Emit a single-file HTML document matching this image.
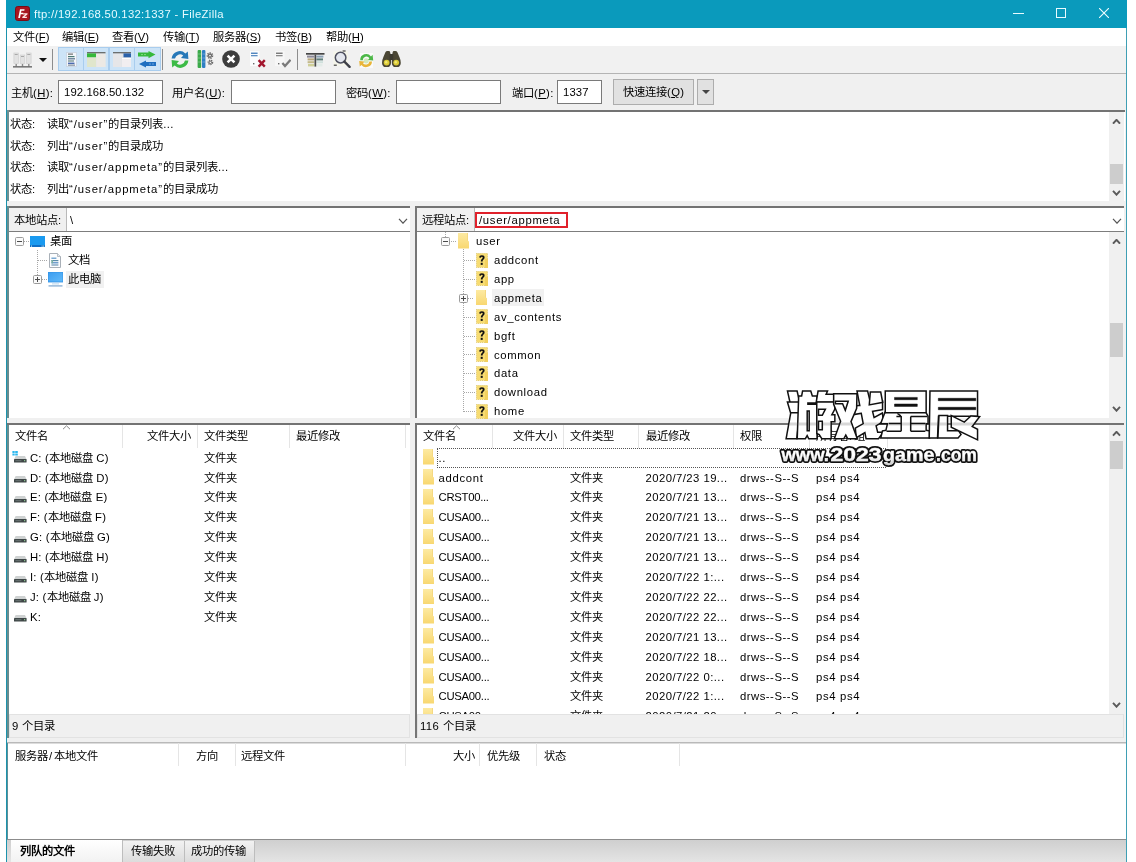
<!DOCTYPE html>
<html lang="zh-CN"><head><meta charset="utf-8"><title>ftp://192.168.50.132:1337 - FileZilla</title>
<style>
html,body{margin:0;padding:0;background:#fff}
body{will-change:transform;width:1136px;height:862px;position:relative;overflow:hidden;font:11.3px "Liberation Sans",sans-serif;color:#000;line-height:14px}
div,span,svg{position:absolute;box-sizing:border-box;white-space:nowrap}
u{text-decoration:underline;text-underline-offset:1px}
.t{height:14px;line-height:14px;color:#000}
.win{left:6px;top:0;width:1121px;height:862px;background:#f0f0f0;border-left:1px solid #1c93ad;border-right:1px solid #3f9fb4}
.title{left:6px;top:0;width:1121px;height:28px;background:#0a9abc}
.title .t{color:#e6fbff;left:28px;top:7px;letter-spacing:.33px}
.menu{left:7px;top:28px;width:1119px;height:18px;background:#fff}
.tb{left:7px;top:46px;width:1119px;height:27px;background:#f1f1f1}
.tbline{left:7px;top:73px;width:1119px;height:1px;background:#b4b4b4}
.tog{top:47px;height:24px;background:#cde4f7;border:1px solid #a9cdee}
.sep{width:1px;background:#8d8d8d}
.inp{top:80px;height:24px;background:#fff;border:1px solid #7a7a7a}
.btn{top:79px;height:26px;background:#e1e1e1;border:1px solid #adadad}
.pane{background:#fff}
.dk{background:#737373}
.sb{background:#f0f0f0;width:15px}
.th{background:#cdcdcd}
.hd{top:0;height:24px;border-right:1px solid #e5e5e5}
.stat{background:#f0f0f0;border:1px solid #e2e2e2;height:24px}
.sel{background:#f1f1f1}
i{font-style:normal;letter-spacing:.95px}
i.p{letter-spacing:.35px}
.lat{letter-spacing:.12px}
.lc{letter-spacing:.7px}
.fn{letter-spacing:-.28px}
.dt{letter-spacing:.45px}
.pm{letter-spacing:.5px}
.ow{letter-spacing:.66px}
.tr{letter-spacing:.65px}
.dr i{letter-spacing:.2px}
</style></head>
<body>
<svg width="0" height="0" style="left:0;top:0"><defs><linearGradient id="fg" x1="0" y1="0" x2="0" y2="1"><stop offset="0" stop-color="#fdeaa2"/><stop offset="1" stop-color="#f8d770"/></linearGradient><linearGradient id="pcg" x1="0" y1="0" x2="1" y2="1"><stop offset="0" stop-color="#3a9cf0"/><stop offset="1" stop-color="#62bbfa"/></linearGradient></defs></svg>
<div class="win"></div>
<div class="title"><svg style="left:9px;top:6px" width="15" height="15" viewBox="0 0 15 15" ><rect x="0.5" y="0.5" width="14" height="14" rx="2.2" fill="#a8141f" stroke="#7a0c16"/><path d="M3.2 12 L5 3.2 H9.6 L9.3 4.8 H6.4 L6 6.8 H8.4 L8.1 8.3 H5.7 L5 12 Z" fill="#fff"/><path d="M8.2 7.2 H12.6 L12.4 8.4 L9.6 10.7 H12 L11.8 12 H7.2 L7.4 10.8 L10.2 8.5 H8 Z" fill="#fde3e3"/></svg><span class="t" id="ttl">ftp://192.168.50.132:1337 - FileZilla</span><svg style="left:1007px;top:13px" width="11" height="1"><rect width="11" height="1" fill="#e8fbff"/></svg><svg style="left:1050px;top:8px" width="10" height="10"><rect x=".5" y=".5" width="9" height="9" fill="none" stroke="#e8fbff"/></svg><svg style="left:1093px;top:8px" width="10" height="10"><path d="M0 0L10 10M10 0L0 10" stroke="#f0fdff" stroke-width="1.1"/></svg></div>
<div class="menu"><span class="t mi" style="left:6px;top:2px;">文件(<u>F</u>)</span><span class="t mi" style="left:55px;top:2px;">编辑(<u>E</u>)</span><span class="t mi" style="left:105px;top:2px;">查看(<u>V</u>)</span><span class="t mi" style="left:156px;top:2px;">传输(<u>T</u>)</span><span class="t mi" style="left:206px;top:2px;">服务器(<u>S</u>)</span><span class="t mi" style="left:268px;top:2px;">书签(<u>B</u>)</span><span class="t mi" style="left:319px;top:2px;">帮助(<u>H</u>)</span></div>
<div class="tb"></div><div class="tbline"></div>
<svg style="left:12.5px;top:50.5px" width="19" height="18" viewBox="0 0 19 18" ><rect x="0.9" y="2" width="4.6" height="10.5" fill="#e2e2e2" stroke="#cdcdcd" stroke-width=".6"/><rect x="1.7" y="3" width="3" height="1" fill="#a8a8a8"/><rect x="2.5" y="13" width="1.4" height="2.3" fill="#8a8a8a"/><rect x="7.2" y="4" width="4.6" height="8.5" fill="#e2e2e2" stroke="#cdcdcd" stroke-width=".6"/><rect x="8" y="5" width="3" height="1" fill="#a8a8a8"/><rect x="8.8" y="13" width="1.4" height="2.3" fill="#8a8a8a"/><rect x="13.5" y="2" width="4.6" height="10.5" fill="#e2e2e2" stroke="#cdcdcd" stroke-width=".6"/><rect x="14.3" y="3" width="3" height="1" fill="#a8a8a8"/><rect x="15.1" y="13" width="1.4" height="2.3" fill="#8a8a8a"/><rect x="0" y="15.2" width="19" height="1.3" fill="#5c5c5c"/></svg><svg style="left:39px;top:57.5px" width="8" height="4"><path d="M0 0H8L4 4Z" fill="#111"/></svg><div class="sep" style="left:52px;top:49px;width:1px;height:21px;"></div><div class="tog" style="left:58px;top:47px;width:26px;height:24px;"></div><div class="tog" style="left:83px;top:47px;width:26px;height:24px;"></div><div class="tog" style="left:109px;top:47px;width:26px;height:24px;"></div><div class="tog" style="left:134px;top:47px;width:27px;height:24px;"></div><svg style="left:66px;top:52px" width="11" height="15" viewBox="0 0 11 15" ><rect x=".5" y=".5" width="10" height="14" fill="#f3f6fa" stroke="#c9d3df" stroke-width=".8"/><rect x="2" y="1.6" width="5" height="1" fill="#555"/><rect x="2" y="4" width="6.5" height="1.2" fill="#4a7a74"/><rect x="2" y="6.2" width="7" height="1.2" fill="#55708a"/><rect x="2" y="8.4" width="6" height="1.2" fill="#6a8a86"/><rect x="2" y="10.6" width="6.5" height="1.4" fill="#4a6ab0"/><rect x="2" y="12.6" width="7" height="1" fill="#6a7a8a"/></svg><svg style="left:87px;top:51.7px" width="18.5" height="15.5" viewBox="0 0 18.5 15.5" ><rect x="0" y="0" width="18.5" height="15.5" fill="#dfe3e8"/><rect x="0" y="0" width="18.5" height="1.4" fill="#6b6f6f"/><rect x="0" y="1.4" width="9" height="4" fill="#35b83a"/><rect x="0" y="5.6" width="9" height="9.9" fill="#e0e6cc"/><rect x="9.4" y="1.8" width="9.1" height="13.7" fill="#ede9e4"/></svg><svg style="left:112.8px;top:51.7px" width="18.5" height="15.5" viewBox="0 0 18.5 15.5" ><rect x="0" y="0" width="18.5" height="15.5" fill="#dfe3e8"/><rect x="0" y="0" width="18.5" height="1.4" fill="#6b6f6f"/><rect x="10.5" y="1.4" width="8" height="4" fill="#2a62aa"/><rect x="0" y="1.8" width="8.6" height="13.7" fill="#e6e6e8"/><rect x="9" y="5.8" width="9.5" height="9.7" fill="#f1eef0"/><rect x="9" y="6" width="9.5" height="1" fill="#fff"/></svg><svg style="left:138px;top:51px" width="18" height="17" viewBox="0 0 18 17" ><path d="M0 1.6 H10.5 V0 L17.5 3.6 L10.5 7.2 V5.6 H0 Z" fill="#36b93c"/><path d="M18 11 H8 V9.4 L1 13 L8 16.6 V15 H18 Z" fill="#1f6fc0"/><path d="M3 3.6h2M6 3.6h2" stroke="#7fd884" stroke-width="1"/><path d="M11 13h2M14 13h2" stroke="#6aa4e0" stroke-width="1"/></svg><div class="sep" style="left:162px;top:49px;width:1px;height:21px;"></div><svg style="left:169.6px;top:49.6px" width="20" height="19" viewBox="0 0 20 19" ><path d="M1.6 8.4 A8.2 8.2 0 0 1 15.4 3.4 L17.8 1.4 L18.4 9 L11 8 L13.2 5.6 A5 5 0 0 0 5 8.4 Z" fill="#2778b8"/><path d="M18.4 10.6 A8.2 8.2 0 0 1 4.6 15.6 L2.2 17.6 L1.6 10 L9 11 L6.8 13.4 A5 5 0 0 0 15 10.6 Z" fill="#3cbb46"/></svg><svg style="left:197.2px;top:50px" width="17" height="18" viewBox="0 0 17 18" ><rect x="0.6" y="0" width="3.6" height="18" rx="1" fill="#3aa94a"/><rect x="5" y="0" width="3.4" height="18" rx="1" fill="#2f7fc4"/><path d="M1 4h3M1 8h3M1 12h3M5.4 4h2.6M5.4 8h2.6M5.4 12h2.6" stroke="#fff" stroke-opacity=".35" stroke-width=".8"/><circle cx="13" cy="5.6" r="2.5" fill="none" stroke="#666" stroke-width="1.7" stroke-dasharray="1.3 .9"/><circle cx="13" cy="5.6" r="1.5" fill="none" stroke="#666" stroke-width="1.1"/><circle cx="13.4" cy="12.4" r="2.1" fill="none" stroke="#6a6a6a" stroke-width="1.5" stroke-dasharray="1.1 .8"/><circle cx="13.4" cy="12.4" r="1.2" fill="none" stroke="#6a6a6a" stroke-width="1"/></svg><svg style="left:221.8px;top:50.2px" width="18" height="18" viewBox="0 0 18 18" ><circle cx="9" cy="9" r="8.8" fill="#3d3d3d"/><path d="M5.6 5.6 L12.4 12.4 M12.4 5.6 L5.6 12.4" stroke="#fff" stroke-width="2.6"/></svg><svg style="left:249.5px;top:51.4px" width="16" height="17" viewBox="0 0 16 17" ><rect x="0" y="0" width="9.5" height="15" fill="#fbfcfd"/><rect x="1" y="1.6" width="6.6" height="1.3" fill="#3f79b8"/><rect x="1" y="4" width="6.6" height="1.3" fill="#5f8fc4"/><rect x="3" y="12" width="1.4" height="1.4" fill="#6a6a6a"/><path d="M8.6 9.2 L14.8 15.6 M14.8 9.2 L8.6 15.6" stroke="#a3162e" stroke-width="2.4"/></svg><svg style="left:274.8px;top:51.4px" width="16.5" height="17" viewBox="0 0 16.5 17" ><rect x="0" y="0" width="9.5" height="15" fill="#f7f7f7"/><rect x="1" y="1.6" width="6.6" height="1.3" fill="#6d6d6d"/><rect x="1" y="4" width="6.6" height="1.3" fill="#8a8a8a"/><rect x="3" y="12" width="1.4" height="1.4" fill="#6a6a6a"/><path d="M7.4 12 L10 15 L15.6 8.8" stroke="#7a7a7a" stroke-width="2.3" fill="none"/></svg><div class="sep" style="left:297px;top:49px;width:1px;height:21px;"></div><svg style="left:306px;top:52.8px" width="18.5" height="14" viewBox="0 0 18.5 14" ><rect x="0" y="0" width="18.5" height="1.7" fill="#454545"/><rect x="1" y="2.6" width="7.2" height="2" fill="#8d8a98"/><rect x="10.4" y="2.6" width="7" height="2" fill="#8aa0b4"/><rect x="1.6" y="5.4" width="6.6" height="2" fill="#b9a77c"/><rect x="10.4" y="5.4" width="6.6" height="2" fill="#5f7f7c"/><rect x="1.6" y="8.2" width="6.6" height="2" fill="#c3b98a"/><rect x="10.4" y="8.2" width="6.6" height="2" fill="#cfe0dc"/><rect x="2" y="11" width="6.2" height="2.4" fill="#cfcf98"/><rect x="10.4" y="11" width="6" height="2.4" fill="#e3ece8"/><rect x="8.5" y="1.6" width="1.7" height="12" fill="#4a4a4a"/></svg><svg style="left:332.6px;top:50.4px" width="18" height="18" viewBox="0 0 18 18" ><rect x="0.4" y="1.4" width="14.6" height="14.4" fill="#f5f5ea"/><circle cx="7.6" cy="7.6" r="5.3" fill="#e3e6ee" stroke="#4e5060" stroke-width="1.5"/><path d="M11.4 11.6 L16.6 16.8" stroke="#3e4048" stroke-width="2.4" stroke-linecap="round"/><rect x="9.6" y="0.4" width="3" height="1.2" fill="#444"/><rect x="0.8" y="14.6" width="3" height="1.2" fill="#444"/></svg><svg style="left:359px;top:52.6px" width="15" height="15" viewBox="0 0 15 15" ><rect x="1" y="0" width="13" height="15" fill="#fafafa"/><path d="M1.2 7.2 A6 6 0 0 1 12 3.4 L13.6 1.8 L14.2 7.4 L8.8 7 L10.4 5.2 A3.6 3.6 0 0 0 3.8 7.2 Z" fill="#4db848"/><path d="M13 8.4 A6 6 0 0 1 2.4 12 L0.8 13.6 L0.2 8 L5.6 8.4 L4 10.2 A3.6 3.6 0 0 0 10.4 8.4 Z" fill="#e8b53a"/><circle cx="7.2" cy="7.8" r="2.6" fill="#bfe0a0" fill-opacity=".7"/></svg><svg style="left:382.4px;top:51.4px" width="19" height="16" viewBox="0 0 19 16" ><path d="M3.4 1.2 Q4 0 5.4 0 H6.8 Q8 0 8.2 1.4 L9 6 V12 A4.4 4.4 0 0 1 0 12 Q0 9 1.4 6 Z" fill="#4b4735"/><path d="M15.4 1.2 Q14.8 0 13.4 0 H12 Q10.8 0 10.6 1.4 L9.8 6 V12 A4.4 4.4 0 0 0 18.8 12 Q18.8 9 17.4 6 Z" fill="#4b4735"/><rect x="7.6" y="3" width="3.6" height="6" fill="#3c3a30"/><circle cx="4.6" cy="11.6" r="2.9" fill="#dccb35"/><circle cx="14.2" cy="11.6" r="2.9" fill="#dccb35"/><circle cx="4.2" cy="11.2" r="1.2" fill="#f0e878"/><circle cx="13.8" cy="11.2" r="1.2" fill="#f0e878"/></svg>
<div class="qc" style="left:0;top:0;width:0;height:0"><span class="t" style="left:11px;top:86px;">主机<i class="p">(<u>H</u>):</i></span><div class="inp" style="left:58px;top:80px;width:105px;height:24px;"><span class="t lat" style="left:5px;top:4px;left:5px">192.168.50.132</span></div><span class="t" style="left:172px;top:86px;">用户名<i class="p">(<u>U</u>):</i></span><div class="inp" style="left:231px;top:80px;width:105px;height:24px;"></div><span class="t" style="left:346px;top:86px;">密码<i class="p">(<u>W</u>):</i></span><div class="inp" style="left:396px;top:80px;width:105px;height:24px;"></div><span class="t" style="left:512px;top:86px;">端口<i class="p">(<u>P</u>):</i></span><div class="inp" style="left:557px;top:80px;width:45px;height:24px;"><span class="t lat" style="left:5px;top:4px;">1337</span></div><div class="btn" style="left:613px;top:79px;width:81px;height:26px;"><span class="t" style="left:9px;top:5px;">快速连接<i class="p">(<u>Q</u>)</i></span></div><div class="btn" style="left:697px;top:79px;width:17px;height:26px;"><svg style="left:4px;top:10px" width="8" height="4"><path d="M0 0H8L4 4Z" fill="#444"/></svg></div></div>
<div class="dk" style="left:8px;top:110px;width:1117px;height:2px;"></div><div class="pane" style="left:8px;top:112px;width:1117px;height:89px;"></div><div class="" style="left:7px;top:110px;width:1.6px;height:91px;background:#6f9092"></div><span class="t" style="left:10px;top:117px;">状态:</span><span class="t" style="left:47px;top:117px;">读取<i>“/user”</i>的目录列表<i class="p">...</i></span><span class="t" style="left:10px;top:138.5px;">状态:</span><span class="t" style="left:47px;top:138.5px;">列出<i>“/user”</i>的目录成功</span><span class="t" style="left:10px;top:160px;">状态:</span><span class="t" style="left:47px;top:160px;">读取<i>“/user/appmeta”</i>的目录列表<i class="p">...</i></span><span class="t" style="left:10px;top:181.5px;">状态:</span><span class="t" style="left:47px;top:181.5px;">列出<i>“/user/appmeta”</i>的目录成功</span><div class="sb" style="left:1109px;top:112px;width:15px;height:89px;"></div><svg style="left:1112px;top:118.5px" width="9" height="5.5" viewBox="0 0 9 5.5" ><path d="M1 4.7 L4.5 0.8 L8 4.7" fill="none" stroke="#5a5a5a" stroke-width="1.9"/></svg><div class="th" style="left:1110px;top:164px;width:13px;height:20px;"></div><svg style="left:1112px;top:190px" width="9" height="5.5" viewBox="0 0 9 5.5" ><path d="M1 0.8 L4.5 4.7 L8 0.8" fill="none" stroke="#5a5a5a" stroke-width="1.9"/></svg>
<div class="dk" style="left:7px;top:206px;width:403px;height:2px;"></div><div class="" style="left:7px;top:206px;width:2px;height:211.5px;background:#688c8e"></div><div class="" style="left:7px;top:423px;width:2px;height:315px;background:#688c8e"></div><div class="pane" style="left:9px;top:208px;width:401px;height:23px;"></div><div class="" style="left:9px;top:208px;width:58px;height:23px;background:#f0f0f0;border-right:1px solid #b9b9b9"><span class="t" style="left:5px;top:5px;">本地站点:</span></div><span class="t" style="left:70px;top:213px;">\</span><svg style="left:398px;top:217.5px" width="10" height="6" viewBox="0 0 10 6" ><path d="M1 0.8 L5 5.2 L9 0.8" fill="none" stroke="#555" stroke-width="1.2"/></svg><div class="" style="left:9px;top:231px;width:401px;height:1px;background:#7d7d7d"></div><div class="pane" style="left:9px;top:232px;width:401px;height:185.5px;"></div><div class="dk" style="left:415px;top:206px;width:709px;height:2px;"></div><div class="" style="left:415px;top:206px;width:2px;height:211.5px;background:#767676"></div><div class="" style="left:415px;top:423px;width:2px;height:315px;background:#767676"></div><div class="pane" style="left:417px;top:208px;width:707px;height:23px;"></div><div class="" style="left:417px;top:208px;width:58px;height:23px;background:#f0f0f0;border-right:1px solid #b9b9b9"><span class="t" style="left:5px;top:5px;">远程站点:</span></div><span class="t lc" style="left:479px;top:213px;">/user/appmeta</span><div class="" style="left:475px;top:211.5px;width:93px;height:16.5px;border:2px solid #e0212b"></div><svg style="left:1112px;top:217.5px" width="10" height="6" viewBox="0 0 10 6" ><path d="M1 0.8 L5 5.2 L9 0.8" fill="none" stroke="#555" stroke-width="1.2"/></svg><div class="" style="left:417px;top:231px;width:707px;height:1px;background:#7d7d7d"></div><div class="pane" style="left:417px;top:232px;width:707px;height:185.5px;"></div>
<div class="" style="left:37px;top:250px;width:1px;height:25px;background:repeating-linear-gradient(180deg,#a8a8a8 0 1px,transparent 1px 2px)"></div><div class="" style="left:38px;top:260px;width:10px;height:1px;background:repeating-linear-gradient(90deg,#a8a8a8 0 1px,transparent 1px 2px)"></div><div class="" style="left:24px;top:241px;width:5px;height:1px;background:repeating-linear-gradient(90deg,#a8a8a8 0 1px,transparent 1px 2px)"></div><div class="" style="left:42px;top:279px;width:5px;height:1px;background:repeating-linear-gradient(90deg,#a8a8a8 0 1px,transparent 1px 2px)"></div><svg style="left:15px;top:237px" width="9" height="9" viewBox="0 0 9 9" ><rect x=".5" y=".5" width="8" height="8" rx="1" fill="#fafafa" stroke="#9b9b9b"/><rect x="2" y="4" width="5" height="1" fill="#4a4a4a"/></svg><svg style="left:29.8px;top:235.6px" width="15" height="11" viewBox="0 0 15 11" ><rect x="0" y="0" width="15" height="11" fill="#1a9af0"/><rect x="0" y="9" width="15" height="2" fill="#0f6fc6"/><rect x="1" y="9.6" width="1" height="1" fill="#dff"/><rect x="11.6" y="9.6" width="1" height="1" fill="#dff"/><rect x="13.2" y="9.6" width="1" height="1" fill="#dff"/></svg><span class="t" style="left:50px;top:234px;">桌面</span><svg style="left:49px;top:252.6px" width="12" height="15" viewBox="0 0 12 15" ><path d="M.5 .5 H8.5 L11.5 3.5 V14.5 H.5 Z" fill="#fcfdfe" stroke="#a9b0b8"/><path d="M8.5 .5 V3.5 H11.5" fill="#e4e8ee" stroke="#a9b0b8" stroke-width=".8"/><rect x="2.4" y="4.6" width="5" height="1.2" fill="#5a94c8"/><rect x="2.4" y="7" width="7" height="1.2" fill="#5a8aa8"/><rect x="2.4" y="9.2" width="7" height="1.2" fill="#4d86c0"/><rect x="2.4" y="11.4" width="7" height="1.2" fill="#6a93b4"/><rect x="2.4" y="7" width="1.6" height="3.4" fill="#7ab0a0"/></svg><span class="t" style="left:67.5px;top:253px;">文档</span><div class="sel" style="left:65.5px;top:270.5px;width:38.5px;height:17px;"></div><svg style="left:33px;top:275px" width="9" height="9" viewBox="0 0 9 9" ><rect x=".5" y=".5" width="8" height="8" rx="1" fill="#fafafa" stroke="#9b9b9b"/><rect x="2" y="4" width="5" height="1" fill="#4a4a4a"/><rect x="4" y="2" width="1" height="5" fill="#4a4a4a"/></svg><svg style="left:47.8px;top:272px" width="15" height="15" viewBox="0 0 15 15" ><rect x="0" y="0" width="15" height="10" fill="url(#pcg)"/><rect x="0" y="0" width="15" height="10" fill="none" stroke="#2f8fe4" stroke-width=".8"/><rect x="4" y="11.4" width="7" height="1" fill="#b8d6ee"/><rect x="0.5" y="13.2" width="14" height="1.4" fill="#8fb4d6"/></svg><span class="t" style="left:67.5px;top:272px;">此电脑</span>
<div class="" style="left:445px;top:232px;width:1px;height:5px;background:repeating-linear-gradient(180deg,#a8a8a8 0 1px,transparent 1px 2px)"></div><div class="" style="left:451px;top:241px;width:6px;height:1px;background:repeating-linear-gradient(90deg,#a8a8a8 0 1px,transparent 1px 2px)"></div><div class="" style="left:463px;top:249px;width:1px;height:163px;background:repeating-linear-gradient(180deg,#a8a8a8 0 1px,transparent 1px 2px)"></div><svg style="left:441px;top:237px" width="9" height="9" viewBox="0 0 9 9" ><rect x=".5" y=".5" width="8" height="8" rx="1" fill="#fafafa" stroke="#9b9b9b"/><rect x="2" y="4" width="5" height="1" fill="#4a4a4a"/></svg><svg style="left:458px;top:233px" width="12" height="15.5" viewBox="0 0 12 15.5" ><path d="M0 0 H9 V6.975 L11 8.525 V15.5 H0 Z" fill="url(#fg)"/><rect x="9" y="0" width=".8" height="7.75" fill="#f3cf62"/></svg><span class="t tr" style="left:476px;top:234px;">user</span><div class="" style="left:464px;top:260px;width:11px;height:1px;background:repeating-linear-gradient(90deg,#a8a8a8 0 1px,transparent 1px 2px)"></div><svg style="left:476px;top:252.5px" width="12" height="15" viewBox="0 0 12 15" ><rect x=".4" y=".4" width="11.2" height="14.2" fill="#f7dc72" stroke="#d9c26a" stroke-width=".8" stroke-dasharray="1 1"/><rect x="9" y="6" width="3" height="9" fill="#f2d05e"/><path d="M3.2 4.6 Q3.2 2.2 5.9 2.2 Q8.6 2.2 8.6 4.5 Q8.6 5.9 7.3 6.8 Q6.6 7.3 6.6 8.6 H4.8 Q4.7 6.8 5.8 6 Q6.7 5.3 6.7 4.6 Q6.7 3.8 5.9 3.8 Q5.1 3.8 5 4.8 Z" fill="#111"/><rect x="4.7" y="9.8" width="2" height="2.1" fill="#111"/></svg><span class="t tr" style="left:494px;top:253px;">addcont</span><div class="" style="left:464px;top:279px;width:11px;height:1px;background:repeating-linear-gradient(90deg,#a8a8a8 0 1px,transparent 1px 2px)"></div><svg style="left:476px;top:271.4px" width="12" height="15" viewBox="0 0 12 15" ><rect x=".4" y=".4" width="11.2" height="14.2" fill="#f7dc72" stroke="#d9c26a" stroke-width=".8" stroke-dasharray="1 1"/><rect x="9" y="6" width="3" height="9" fill="#f2d05e"/><path d="M3.2 4.6 Q3.2 2.2 5.9 2.2 Q8.6 2.2 8.6 4.5 Q8.6 5.9 7.3 6.8 Q6.6 7.3 6.6 8.6 H4.8 Q4.7 6.8 5.8 6 Q6.7 5.3 6.7 4.6 Q6.7 3.8 5.9 3.8 Q5.1 3.8 5 4.8 Z" fill="#111"/><rect x="4.7" y="9.8" width="2" height="2.1" fill="#111"/></svg><span class="t tr" style="left:494px;top:271.9px;">app</span><div class="sel" style="left:492px;top:289.3px;width:52px;height:17px;"></div><div class="" style="left:468px;top:298px;width:6px;height:1px;background:repeating-linear-gradient(90deg,#a8a8a8 0 1px,transparent 1px 2px)"></div><svg style="left:459px;top:294px" width="9" height="9" viewBox="0 0 9 9" ><rect x=".5" y=".5" width="8" height="8" rx="1" fill="#fafafa" stroke="#9b9b9b"/><rect x="2" y="4" width="5" height="1" fill="#4a4a4a"/><rect x="4" y="2" width="1" height="5" fill="#4a4a4a"/></svg><svg style="left:476px;top:290.3px" width="12" height="15" viewBox="0 0 12 15" ><path d="M0 0 H9 V6.75 L11 8.25 V15 H0 Z" fill="url(#fg)"/><rect x="9" y="0" width=".8" height="7.5" fill="#f3cf62"/></svg><span class="t tr" style="left:494px;top:290.8px;">appmeta</span><div class="" style="left:464px;top:317px;width:11px;height:1px;background:repeating-linear-gradient(90deg,#a8a8a8 0 1px,transparent 1px 2px)"></div><svg style="left:476px;top:309.2px" width="12" height="15" viewBox="0 0 12 15" ><rect x=".4" y=".4" width="11.2" height="14.2" fill="#f7dc72" stroke="#d9c26a" stroke-width=".8" stroke-dasharray="1 1"/><rect x="9" y="6" width="3" height="9" fill="#f2d05e"/><path d="M3.2 4.6 Q3.2 2.2 5.9 2.2 Q8.6 2.2 8.6 4.5 Q8.6 5.9 7.3 6.8 Q6.6 7.3 6.6 8.6 H4.8 Q4.7 6.8 5.8 6 Q6.7 5.3 6.7 4.6 Q6.7 3.8 5.9 3.8 Q5.1 3.8 5 4.8 Z" fill="#111"/><rect x="4.7" y="9.8" width="2" height="2.1" fill="#111"/></svg><span class="t tr" style="left:494px;top:309.7px;">av_contents</span><div class="" style="left:464px;top:336px;width:11px;height:1px;background:repeating-linear-gradient(90deg,#a8a8a8 0 1px,transparent 1px 2px)"></div><svg style="left:476px;top:328.1px" width="12" height="15" viewBox="0 0 12 15" ><rect x=".4" y=".4" width="11.2" height="14.2" fill="#f7dc72" stroke="#d9c26a" stroke-width=".8" stroke-dasharray="1 1"/><rect x="9" y="6" width="3" height="9" fill="#f2d05e"/><path d="M3.2 4.6 Q3.2 2.2 5.9 2.2 Q8.6 2.2 8.6 4.5 Q8.6 5.9 7.3 6.8 Q6.6 7.3 6.6 8.6 H4.8 Q4.7 6.8 5.8 6 Q6.7 5.3 6.7 4.6 Q6.7 3.8 5.9 3.8 Q5.1 3.8 5 4.8 Z" fill="#111"/><rect x="4.7" y="9.8" width="2" height="2.1" fill="#111"/></svg><span class="t tr" style="left:494px;top:328.6px;">bgft</span><div class="" style="left:464px;top:354px;width:11px;height:1px;background:repeating-linear-gradient(90deg,#a8a8a8 0 1px,transparent 1px 2px)"></div><svg style="left:476px;top:347px" width="12" height="15" viewBox="0 0 12 15" ><rect x=".4" y=".4" width="11.2" height="14.2" fill="#f7dc72" stroke="#d9c26a" stroke-width=".8" stroke-dasharray="1 1"/><rect x="9" y="6" width="3" height="9" fill="#f2d05e"/><path d="M3.2 4.6 Q3.2 2.2 5.9 2.2 Q8.6 2.2 8.6 4.5 Q8.6 5.9 7.3 6.8 Q6.6 7.3 6.6 8.6 H4.8 Q4.7 6.8 5.8 6 Q6.7 5.3 6.7 4.6 Q6.7 3.8 5.9 3.8 Q5.1 3.8 5 4.8 Z" fill="#111"/><rect x="4.7" y="9.8" width="2" height="2.1" fill="#111"/></svg><span class="t tr" style="left:494px;top:347.5px;">common</span><div class="" style="left:464px;top:373px;width:11px;height:1px;background:repeating-linear-gradient(90deg,#a8a8a8 0 1px,transparent 1px 2px)"></div><svg style="left:476px;top:365.9px" width="12" height="15" viewBox="0 0 12 15" ><rect x=".4" y=".4" width="11.2" height="14.2" fill="#f7dc72" stroke="#d9c26a" stroke-width=".8" stroke-dasharray="1 1"/><rect x="9" y="6" width="3" height="9" fill="#f2d05e"/><path d="M3.2 4.6 Q3.2 2.2 5.9 2.2 Q8.6 2.2 8.6 4.5 Q8.6 5.9 7.3 6.8 Q6.6 7.3 6.6 8.6 H4.8 Q4.7 6.8 5.8 6 Q6.7 5.3 6.7 4.6 Q6.7 3.8 5.9 3.8 Q5.1 3.8 5 4.8 Z" fill="#111"/><rect x="4.7" y="9.8" width="2" height="2.1" fill="#111"/></svg><span class="t tr" style="left:494px;top:366.4px;">data</span><div class="" style="left:464px;top:392px;width:11px;height:1px;background:repeating-linear-gradient(90deg,#a8a8a8 0 1px,transparent 1px 2px)"></div><svg style="left:476px;top:384.8px" width="12" height="15" viewBox="0 0 12 15" ><rect x=".4" y=".4" width="11.2" height="14.2" fill="#f7dc72" stroke="#d9c26a" stroke-width=".8" stroke-dasharray="1 1"/><rect x="9" y="6" width="3" height="9" fill="#f2d05e"/><path d="M3.2 4.6 Q3.2 2.2 5.9 2.2 Q8.6 2.2 8.6 4.5 Q8.6 5.9 7.3 6.8 Q6.6 7.3 6.6 8.6 H4.8 Q4.7 6.8 5.8 6 Q6.7 5.3 6.7 4.6 Q6.7 3.8 5.9 3.8 Q5.1 3.8 5 4.8 Z" fill="#111"/><rect x="4.7" y="9.8" width="2" height="2.1" fill="#111"/></svg><span class="t tr" style="left:494px;top:385.3px;">download</span><div class="" style="left:464px;top:411px;width:11px;height:1px;background:repeating-linear-gradient(90deg,#a8a8a8 0 1px,transparent 1px 2px)"></div><svg style="left:476px;top:403.7px" width="12" height="15" viewBox="0 0 12 15" ><rect x=".4" y=".4" width="11.2" height="14.2" fill="#f7dc72" stroke="#d9c26a" stroke-width=".8" stroke-dasharray="1 1"/><rect x="9" y="6" width="3" height="9" fill="#f2d05e"/><path d="M3.2 4.6 Q3.2 2.2 5.9 2.2 Q8.6 2.2 8.6 4.5 Q8.6 5.9 7.3 6.8 Q6.6 7.3 6.6 8.6 H4.8 Q4.7 6.8 5.8 6 Q6.7 5.3 6.7 4.6 Q6.7 3.8 5.9 3.8 Q5.1 3.8 5 4.8 Z" fill="#111"/><rect x="4.7" y="9.8" width="2" height="2.1" fill="#111"/></svg><span class="t tr" style="left:494px;top:404.2px;">home</span><div class="sb" style="left:1109px;top:232px;width:15px;height:185.5px;"></div><svg style="left:1112px;top:238.5px" width="9" height="5.5" viewBox="0 0 9 5.5" ><path d="M1 4.7 L4.5 0.8 L8 4.7" fill="none" stroke="#5a5a5a" stroke-width="1.9"/></svg><div class="th" style="left:1110px;top:322.5px;width:13px;height:34px;"></div><svg style="left:1112px;top:406px" width="9" height="5.5" viewBox="0 0 9 5.5" ><path d="M1 0.8 L4.5 4.7 L8 0.8" fill="none" stroke="#5a5a5a" stroke-width="1.9"/></svg>
<div class="dk" style="left:7px;top:423px;width:403px;height:2px;"></div><div class="pane" style="left:9px;top:425px;width:401px;height:289px;"></div><div class="hd" style="left:9px;top:425px;width:113.5px;height:23px;"><span class="t" style="left:5.5px;top:4px;">文件名</span></div><div class="hd" style="left:122.5px;top:425px;width:75.5px;height:23px;"><span class="t" style="left:24.5px;top:4px;">文件大小</span></div><div class="hd" style="left:198px;top:425px;width:92px;height:23px;"><span class="t" style="left:6px;top:4px;">文件类型</span></div><div class="hd" style="left:290px;top:425px;width:116px;height:23px;"><span class="t" style="left:6px;top:4px;">最近修改</span></div><svg style="left:62px;top:424.5px" width="9" height="5" viewBox="0 0 9 5" ><path d="M1 4.2 L4.5 0.8 L8 4.2" fill="none" stroke="#8a8a8a" stroke-width="1"/></svg><svg style="left:14px;top:451.2px" width="13" height="12" viewBox="0 0 13 12" overflow="visible"><path d="M1.6 5 H11 L12.4 8 H.2 Z" fill="#cfd2d2"/><rect x="0" y="8" width="12.6" height="3.6" rx=".6" fill="#3f4747"/><rect x="1.4" y="9.2" width="6" height="1" fill="#6c7676"/><rect x="10" y="9.2" width="1.2" height="1" fill="#9fe0a0"/><rect x="-1.6" y="0" width="2.3" height="2" fill="#2bb7ee"/><rect x="1.2" y="0" width="2.6" height="2" fill="#2bb7ee"/><rect x="-1.6" y="2.5" width="2.3" height="2" fill="#2bb7ee"/><rect x="1.2" y="2.5" width="2.6" height="2" fill="#2bb7ee"/></svg><span class="t dr" style="left:30px;top:450.6px;"><i>C: (</i>本地磁盘<i> C)</i></span><span class="t" style="left:204px;top:450.6px;">文件夹</span><svg style="left:14px;top:471.1px" width="13" height="12" viewBox="0 0 13 12" overflow="visible"><path d="M1.6 5 H11 L12.4 8 H.2 Z" fill="#cfd2d2"/><rect x="0" y="8" width="12.6" height="3.6" rx=".6" fill="#3f4747"/><rect x="1.4" y="9.2" width="6" height="1" fill="#6c7676"/><rect x="10" y="9.2" width="1.2" height="1" fill="#9fe0a0"/></svg><span class="t dr" style="left:30px;top:470.5px;"><i>D: (</i>本地磁盘<i> D)</i></span><span class="t" style="left:204px;top:470.5px;">文件夹</span><svg style="left:14px;top:491px" width="13" height="12" viewBox="0 0 13 12" overflow="visible"><path d="M1.6 5 H11 L12.4 8 H.2 Z" fill="#cfd2d2"/><rect x="0" y="8" width="12.6" height="3.6" rx=".6" fill="#3f4747"/><rect x="1.4" y="9.2" width="6" height="1" fill="#6c7676"/><rect x="10" y="9.2" width="1.2" height="1" fill="#9fe0a0"/></svg><span class="t dr" style="left:30px;top:490.4px;"><i>E: (</i>本地磁盘<i> E)</i></span><span class="t" style="left:204px;top:490.4px;">文件夹</span><svg style="left:14px;top:510.9px" width="13" height="12" viewBox="0 0 13 12" overflow="visible"><path d="M1.6 5 H11 L12.4 8 H.2 Z" fill="#cfd2d2"/><rect x="0" y="8" width="12.6" height="3.6" rx=".6" fill="#3f4747"/><rect x="1.4" y="9.2" width="6" height="1" fill="#6c7676"/><rect x="10" y="9.2" width="1.2" height="1" fill="#9fe0a0"/></svg><span class="t dr" style="left:30px;top:510.3px;"><i>F: (</i>本地磁盘<i> F)</i></span><span class="t" style="left:204px;top:510.3px;">文件夹</span><svg style="left:14px;top:530.8px" width="13" height="12" viewBox="0 0 13 12" overflow="visible"><path d="M1.6 5 H11 L12.4 8 H.2 Z" fill="#cfd2d2"/><rect x="0" y="8" width="12.6" height="3.6" rx=".6" fill="#3f4747"/><rect x="1.4" y="9.2" width="6" height="1" fill="#6c7676"/><rect x="10" y="9.2" width="1.2" height="1" fill="#9fe0a0"/></svg><span class="t dr" style="left:30px;top:530.2px;"><i>G: (</i>本地磁盘<i> G)</i></span><span class="t" style="left:204px;top:530.2px;">文件夹</span><svg style="left:14px;top:550.7px" width="13" height="12" viewBox="0 0 13 12" overflow="visible"><path d="M1.6 5 H11 L12.4 8 H.2 Z" fill="#cfd2d2"/><rect x="0" y="8" width="12.6" height="3.6" rx=".6" fill="#3f4747"/><rect x="1.4" y="9.2" width="6" height="1" fill="#6c7676"/><rect x="10" y="9.2" width="1.2" height="1" fill="#9fe0a0"/></svg><span class="t dr" style="left:30px;top:550.1px;"><i>H: (</i>本地磁盘<i> H)</i></span><span class="t" style="left:204px;top:550.1px;">文件夹</span><svg style="left:14px;top:570.6px" width="13" height="12" viewBox="0 0 13 12" overflow="visible"><path d="M1.6 5 H11 L12.4 8 H.2 Z" fill="#cfd2d2"/><rect x="0" y="8" width="12.6" height="3.6" rx=".6" fill="#3f4747"/><rect x="1.4" y="9.2" width="6" height="1" fill="#6c7676"/><rect x="10" y="9.2" width="1.2" height="1" fill="#9fe0a0"/></svg><span class="t dr" style="left:30px;top:570px;"><i>I: (</i>本地磁盘<i> I)</i></span><span class="t" style="left:204px;top:570px;">文件夹</span><svg style="left:14px;top:590.5px" width="13" height="12" viewBox="0 0 13 12" overflow="visible"><path d="M1.6 5 H11 L12.4 8 H.2 Z" fill="#cfd2d2"/><rect x="0" y="8" width="12.6" height="3.6" rx=".6" fill="#3f4747"/><rect x="1.4" y="9.2" width="6" height="1" fill="#6c7676"/><rect x="10" y="9.2" width="1.2" height="1" fill="#9fe0a0"/></svg><span class="t dr" style="left:30px;top:589.9px;"><i>J: (</i>本地磁盘<i> J)</i></span><span class="t" style="left:204px;top:589.9px;">文件夹</span><svg style="left:14px;top:610.4px" width="13" height="12" viewBox="0 0 13 12" overflow="visible"><path d="M1.6 5 H11 L12.4 8 H.2 Z" fill="#cfd2d2"/><rect x="0" y="8" width="12.6" height="3.6" rx=".6" fill="#3f4747"/><rect x="1.4" y="9.2" width="6" height="1" fill="#6c7676"/><rect x="10" y="9.2" width="1.2" height="1" fill="#9fe0a0"/></svg><span class="t dr" style="left:30px;top:609.8px;"><i>K:</i></span><span class="t" style="left:204px;top:609.8px;">文件夹</span><div class="stat" style="left:9px;top:714px;width:401px;height:24px;"><span class="t" style="left:2px;top:4.3px;"><i class="p">9 </i>个目录</span></div>
<div class="dk" style="left:415px;top:423px;width:709px;height:2px;"></div><div class="pane" style="left:417px;top:425px;width:707px;height:289px;overflow:hidden"><div class="hd" style="left:0px;top:0px;width:76px;height:23px;"><span class="t" style="left:6px;top:4px;">文件名</span></div><div class="hd" style="left:76px;top:0px;width:71px;height:23px;"><span class="t" style="left:19.5px;top:4px;">文件大小</span></div><div class="hd" style="left:147px;top:0px;width:75px;height:23px;"><span class="t" style="left:5.5px;top:4px;">文件类型</span></div><div class="hd" style="left:222px;top:0px;width:94.5px;height:23px;"><span class="t" style="left:6.5px;top:4px;">最近修改</span></div><div class="hd" style="left:316.5px;top:0px;width:76px;height:23px;"><span class="t" style="left:6.5px;top:4px;">权限</span></div><div class="hd" style="left:392.5px;top:0px;width:78px;height:23px;"><span class="t" style="left:6.5px;top:4px;">所有者<i style="letter-spacing:0;padding:0 1px">/</i>组</span></div><svg style="left:35px;top:-0.5px" width="9" height="5" viewBox="0 0 9 5" ><path d="M1 4.2 L4.5 0.8 L8 4.2" fill="none" stroke="#8a8a8a" stroke-width="1"/></svg><svg style="left:6px;top:24.2px" width="12" height="15.5" viewBox="0 0 12 15.5" ><path d="M0 0 H9 V6.975 L11 8.525 V15.5 H0 Z" fill="url(#fg)"/><rect x="9" y="0" width=".8" height="7.75" fill="#f3cf62"/></svg><span class="t lc" style="left:21.5px;top:25.6px;">..</span><svg style="left:6px;top:44.1px" width="12" height="15.5" viewBox="0 0 12 15.5" ><path d="M0 0 H9 V6.975 L11 8.525 V15.5 H0 Z" fill="url(#fg)"/><rect x="9" y="0" width=".8" height="7.75" fill="#f3cf62"/></svg><span class="t lc" style="left:21.5px;top:45.5px;">addcont</span><span class="t" style="left:152.5px;top:45.5px;">文件夹</span><span class="t dt" style="left:228.5px;top:45.5px;">2020/7/23 19...</span><span class="t pm" style="left:323px;top:45.5px;">drws--S--S</span><span class="t ow" style="left:399px;top:45.5px;">ps4 ps4</span><svg style="left:6px;top:64px" width="12" height="15.5" viewBox="0 0 12 15.5" ><path d="M0 0 H9 V6.975 L11 8.525 V15.5 H0 Z" fill="url(#fg)"/><rect x="9" y="0" width=".8" height="7.75" fill="#f3cf62"/></svg><span class="t fn" style="left:21.5px;top:65.4px;">CRST00...</span><span class="t" style="left:152.5px;top:65.4px;">文件夹</span><span class="t dt" style="left:228.5px;top:65.4px;">2020/7/21 13...</span><span class="t pm" style="left:323px;top:65.4px;">drws--S--S</span><span class="t ow" style="left:399px;top:65.4px;">ps4 ps4</span><svg style="left:6px;top:83.9px" width="12" height="15.5" viewBox="0 0 12 15.5" ><path d="M0 0 H9 V6.975 L11 8.525 V15.5 H0 Z" fill="url(#fg)"/><rect x="9" y="0" width=".8" height="7.75" fill="#f3cf62"/></svg><span class="t fn" style="left:21.5px;top:85.3px;">CUSA00...</span><span class="t" style="left:152.5px;top:85.3px;">文件夹</span><span class="t dt" style="left:228.5px;top:85.3px;">2020/7/21 13...</span><span class="t pm" style="left:323px;top:85.3px;">drws--S--S</span><span class="t ow" style="left:399px;top:85.3px;">ps4 ps4</span><svg style="left:6px;top:103.8px" width="12" height="15.5" viewBox="0 0 12 15.5" ><path d="M0 0 H9 V6.975 L11 8.525 V15.5 H0 Z" fill="url(#fg)"/><rect x="9" y="0" width=".8" height="7.75" fill="#f3cf62"/></svg><span class="t fn" style="left:21.5px;top:105.2px;">CUSA00...</span><span class="t" style="left:152.5px;top:105.2px;">文件夹</span><span class="t dt" style="left:228.5px;top:105.2px;">2020/7/21 13...</span><span class="t pm" style="left:323px;top:105.2px;">drws--S--S</span><span class="t ow" style="left:399px;top:105.2px;">ps4 ps4</span><svg style="left:6px;top:123.7px" width="12" height="15.5" viewBox="0 0 12 15.5" ><path d="M0 0 H9 V6.975 L11 8.525 V15.5 H0 Z" fill="url(#fg)"/><rect x="9" y="0" width=".8" height="7.75" fill="#f3cf62"/></svg><span class="t fn" style="left:21.5px;top:125.1px;">CUSA00...</span><span class="t" style="left:152.5px;top:125.1px;">文件夹</span><span class="t dt" style="left:228.5px;top:125.1px;">2020/7/21 13...</span><span class="t pm" style="left:323px;top:125.1px;">drws--S--S</span><span class="t ow" style="left:399px;top:125.1px;">ps4 ps4</span><svg style="left:6px;top:143.6px" width="12" height="15.5" viewBox="0 0 12 15.5" ><path d="M0 0 H9 V6.975 L11 8.525 V15.5 H0 Z" fill="url(#fg)"/><rect x="9" y="0" width=".8" height="7.75" fill="#f3cf62"/></svg><span class="t fn" style="left:21.5px;top:145px;">CUSA00...</span><span class="t" style="left:152.5px;top:145px;">文件夹</span><span class="t dt" style="left:228.5px;top:145px;">2020/7/22 1:...</span><span class="t pm" style="left:323px;top:145px;">drws--S--S</span><span class="t ow" style="left:399px;top:145px;">ps4 ps4</span><svg style="left:6px;top:163.5px" width="12" height="15.5" viewBox="0 0 12 15.5" ><path d="M0 0 H9 V6.975 L11 8.525 V15.5 H0 Z" fill="url(#fg)"/><rect x="9" y="0" width=".8" height="7.75" fill="#f3cf62"/></svg><span class="t fn" style="left:21.5px;top:164.9px;">CUSA00...</span><span class="t" style="left:152.5px;top:164.9px;">文件夹</span><span class="t dt" style="left:228.5px;top:164.9px;">2020/7/22 22...</span><span class="t pm" style="left:323px;top:164.9px;">drws--S--S</span><span class="t ow" style="left:399px;top:164.9px;">ps4 ps4</span><svg style="left:6px;top:183.4px" width="12" height="15.5" viewBox="0 0 12 15.5" ><path d="M0 0 H9 V6.975 L11 8.525 V15.5 H0 Z" fill="url(#fg)"/><rect x="9" y="0" width=".8" height="7.75" fill="#f3cf62"/></svg><span class="t fn" style="left:21.5px;top:184.8px;">CUSA00...</span><span class="t" style="left:152.5px;top:184.8px;">文件夹</span><span class="t dt" style="left:228.5px;top:184.8px;">2020/7/22 22...</span><span class="t pm" style="left:323px;top:184.8px;">drws--S--S</span><span class="t ow" style="left:399px;top:184.8px;">ps4 ps4</span><svg style="left:6px;top:203.3px" width="12" height="15.5" viewBox="0 0 12 15.5" ><path d="M0 0 H9 V6.975 L11 8.525 V15.5 H0 Z" fill="url(#fg)"/><rect x="9" y="0" width=".8" height="7.75" fill="#f3cf62"/></svg><span class="t fn" style="left:21.5px;top:204.7px;">CUSA00...</span><span class="t" style="left:152.5px;top:204.7px;">文件夹</span><span class="t dt" style="left:228.5px;top:204.7px;">2020/7/21 13...</span><span class="t pm" style="left:323px;top:204.7px;">drws--S--S</span><span class="t ow" style="left:399px;top:204.7px;">ps4 ps4</span><svg style="left:6px;top:223.2px" width="12" height="15.5" viewBox="0 0 12 15.5" ><path d="M0 0 H9 V6.975 L11 8.525 V15.5 H0 Z" fill="url(#fg)"/><rect x="9" y="0" width=".8" height="7.75" fill="#f3cf62"/></svg><span class="t fn" style="left:21.5px;top:224.6px;">CUSA00...</span><span class="t" style="left:152.5px;top:224.6px;">文件夹</span><span class="t dt" style="left:228.5px;top:224.6px;">2020/7/22 18...</span><span class="t pm" style="left:323px;top:224.6px;">drws--S--S</span><span class="t ow" style="left:399px;top:224.6px;">ps4 ps4</span><svg style="left:6px;top:243.1px" width="12" height="15.5" viewBox="0 0 12 15.5" ><path d="M0 0 H9 V6.975 L11 8.525 V15.5 H0 Z" fill="url(#fg)"/><rect x="9" y="0" width=".8" height="7.75" fill="#f3cf62"/></svg><span class="t fn" style="left:21.5px;top:244.5px;">CUSA00...</span><span class="t" style="left:152.5px;top:244.5px;">文件夹</span><span class="t dt" style="left:228.5px;top:244.5px;">2020/7/22 0:...</span><span class="t pm" style="left:323px;top:244.5px;">drws--S--S</span><span class="t ow" style="left:399px;top:244.5px;">ps4 ps4</span><svg style="left:6px;top:263px" width="12" height="15.5" viewBox="0 0 12 15.5" ><path d="M0 0 H9 V6.975 L11 8.525 V15.5 H0 Z" fill="url(#fg)"/><rect x="9" y="0" width=".8" height="7.75" fill="#f3cf62"/></svg><span class="t fn" style="left:21.5px;top:264.4px;">CUSA00...</span><span class="t" style="left:152.5px;top:264.4px;">文件夹</span><span class="t dt" style="left:228.5px;top:264.4px;">2020/7/22 1:...</span><span class="t pm" style="left:323px;top:264.4px;">drws--S--S</span><span class="t ow" style="left:399px;top:264.4px;">ps4 ps4</span><svg style="left:6px;top:282.9px" width="12" height="15.5" viewBox="0 0 12 15.5" ><path d="M0 0 H9 V6.975 L11 8.525 V15.5 H0 Z" fill="url(#fg)"/><rect x="9" y="0" width=".8" height="7.75" fill="#f3cf62"/></svg><span class="t fn" style="left:21.5px;top:284.3px;">CUSA00...</span><span class="t" style="left:152.5px;top:284.3px;">文件夹</span><span class="t dt" style="left:228.5px;top:284.3px;">2020/7/21 20...</span><span class="t pm" style="left:323px;top:284.3px;">drws--S--S</span><span class="t ow" style="left:399px;top:284.3px;">ps4 ps4</span><div class="" style="left:19.5px;top:22.5px;width:449px;height:20px;border:1px dotted #555"></div><div class="sb" style="left:692px;top:0px;width:15px;height:289px;"></div><svg style="left:695px;top:6px" width="9" height="5.5" viewBox="0 0 9 5.5" ><path d="M1 4.7 L4.5 0.8 L8 4.7" fill="none" stroke="#5a5a5a" stroke-width="1.9"/></svg><div class="th" style="left:693px;top:16px;width:13px;height:28px;"></div><svg style="left:695px;top:277px" width="9" height="5.5" viewBox="0 0 9 5.5" ><path d="M1 0.8 L4.5 4.7 L8 0.8" fill="none" stroke="#5a5a5a" stroke-width="1.9"/></svg></div><div class="stat" style="left:417px;top:714px;width:707px;height:24px;"><span class="t" style="left:2px;top:4.3px;"><i class="p">116 </i>个目录</span></div>
<div class="" style="left:7px;top:742px;width:1119px;height:1px;background:#b9b9b9"></div><div class="pane" style="left:7px;top:743px;width:1119px;height:96px;border-top:1px solid #dcdcdc"></div><div class="" style="left:7px;top:743px;width:1px;height:119px;background:#5f8f96"></div><div class="hd" style="left:8px;top:743px;width:171px;height:23px;"><span class="t" style="left:6.5px;top:5.5px;">服务器<i style="letter-spacing:0;padding:0 1.5px">/</i>本地文件</span></div><div class="hd" style="left:179px;top:743px;width:57px;height:23px;"><span class="t" style="left:17px;top:5.5px;">方向</span></div><div class="hd" style="left:236px;top:743px;width:170px;height:23px;"><span class="t" style="left:5px;top:5.5px;">远程文件</span></div><div class="hd" style="left:406px;top:743px;width:74px;height:23px;"><span class="t" style="left:47px;top:5.5px;">大小</span></div><div class="hd" style="left:480px;top:743px;width:57px;height:23px;"><span class="t" style="left:6.5px;top:5.5px;">优先级</span></div><div class="hd" style="left:537px;top:743px;width:143px;height:23px;"><span class="t" style="left:6.5px;top:5.5px;">状态</span></div><div class="" style="left:7px;top:839px;width:1119px;height:1px;background:#8c8c8c"></div><div class="" style="left:7px;top:840px;width:1119px;height:22px;background:linear-gradient(#cfcfcf,#e4e4e4)"></div><div class="" style="left:11px;top:840px;width:112px;height:22px;background:linear-gradient(#fff,#f2f2f2);border-right:1px solid #bdbdbd"><span class="t" style="left:8.5px;top:4px;font-weight:bold">列队的文件</span></div><div class="" style="left:123px;top:841px;width:62px;height:21px;background:linear-gradient(#f2f2f2,#dcdcdc);border-right:1px solid #bdbdbd"><span class="t" style="left:8px;top:3px;">传输失败</span></div><div class="" style="left:185px;top:841px;width:70px;height:21px;background:linear-gradient(#f2f2f2,#dcdcdc);border-right:1px solid #bdbdbd"><span class="t" style="left:6px;top:3px;">成功的传输</span></div>
<svg style="left:776px;top:384px" width="210" height="86" viewBox="0 0 210 86" role="img" aria-label="游戏星辰 www.2023game.com"><defs><linearGradient id="lgq" x1="0" y1="0" x2="0" y2="1"><stop offset="0" stop-color="#fff"/><stop offset=".55" stop-color="#fff"/><stop offset="1" stop-color="#c8c8c8"/></linearGradient></defs><clipPath id="lgc"><path d="M12.4 7.7 L20.5 7.7 L22.8 18.1 L14.7 18.1Z M12.4 18.7 L22.8 18.7 L22.8 28.9 L15.4 28.9Z M15.4 29.4 L22.8 29.4 L20.1 54.1 L11.0 54.1Z M27.2 7.7 L34.2 7.7 L35.9 13.1 L26.2 13.1Z M23.4 12.8 L40.3 12.8 L40.3 54.1 L33.2 54.1 L31.2 50.1 L28.9 54.1 L22.0 54.1Z M42.7 7.7 L50.4 7.7 L49.0 11.1 L58.1 11.1 L58.1 17.6 L41.1 17.6Z M41.5 18.7 L58.1 18.7 L58.1 24.9 L54.6 31.6 L58.1 31.6 L58.1 37.0 L54.4 37.0 L54.4 54.1 L46.3 54.1 L43.7 50.1 L41.6 49.1Z M81.9 7.7 L91.0 7.7 L101.1 49.1 L105.8 49.1 L102.1 54.1 L90.7 54.1Z M80.6 22.5 L84.9 22.0 L105.8 18.1 L105.8 24.9 L79.2 29.6Z M96.0 35.6 L105.8 30.2 L106.6 37.0 L80.9 52.6 L80.1 44.5Z M95.0 8.7 L104.1 8.7 L105.8 17.8 L94.1 20.0Z M58.4 10.4 L80.2 10.4 L79.9 24.2 L74.2 37.6 L80.2 54.1 L72.2 54.1 L69.8 49.4 L67.4 54.1 L59.4 54.1 L65.4 37.3 L58.4 20.2Z M109.5 29.0 L149.4 29.0 L151.3 32.4 L151.3 39.0 L149.4 39.0 L149.4 47.1 L152.8 47.6 L152.8 53.3 L105.7 53.3 L107.1 47.6 L110.5 47.1 L112.4 39.0 L105.7 39.0Z M110.0 7.7 L149.4 7.7 L149.4 28.1 L110.0 28.1Z M154.7 7.7 L200.8 7.7 L200.8 31.4 L161.8 31.4 L160.8 53.3 L154.0 53.3Z M163.7 32.2 L170.8 32.2 L170.8 47.6 L182.2 47.6 L184.1 50.4 L181.7 53.3 L162.7 53.3Z M176.0 32.8 L188.4 39.0 L195.1 32.8 L202.2 33.3 L195.1 42.8 L200.8 45.7 L200.8 54.7 L176.0 42.8Z"/></clipPath><path d="M74.2 37.6 L79.2 29.6 L86.3 28.9 L88.6 40.0 L80.2 44.5Z M95.0 28.4 L105.8 24.9 L105.8 30.2 L97.0 35.6Z" fill="#fff"/><path d="M12.4 7.7 L20.5 7.7 L22.8 18.1 L14.7 18.1Z" fill="#111" stroke="#111" stroke-width="3"/><path d="M12.4 7.7 L20.5 7.7 L22.8 18.1 L14.7 18.1Z" fill="#fff"/><path d="M12.4 18.7 L22.8 18.7 L22.8 28.9 L15.4 28.9Z" fill="#111" stroke="#111" stroke-width="3"/><path d="M12.4 18.7 L22.8 18.7 L22.8 28.9 L15.4 28.9Z" fill="#fff"/><path d="M15.4 29.4 L22.8 29.4 L20.1 54.1 L11.0 54.1Z" fill="#111" stroke="#111" stroke-width="3"/><path d="M15.4 29.4 L22.8 29.4 L20.1 54.1 L11.0 54.1Z" fill="#fff"/><path d="M27.2 7.7 L34.2 7.7 L35.9 13.1 L26.2 13.1Z M23.4 12.8 L40.3 12.8 L40.3 54.1 L33.2 54.1 L31.2 50.1 L28.9 54.1 L22.0 54.1Z" fill="#111" stroke="#111" stroke-width="3"/><path d="M27.2 7.7 L34.2 7.7 L35.9 13.1 L26.2 13.1Z M23.4 12.8 L40.3 12.8 L40.3 54.1 L33.2 54.1 L31.2 50.1 L28.9 54.1 L22.0 54.1Z" fill="#fff"/><path d="M42.7 7.7 L50.4 7.7 L49.0 11.1 L58.1 11.1 L58.1 17.6 L41.1 17.6Z" fill="#111" stroke="#111" stroke-width="3"/><path d="M42.7 7.7 L50.4 7.7 L49.0 11.1 L58.1 11.1 L58.1 17.6 L41.1 17.6Z" fill="#fff"/><path d="M41.5 18.7 L58.1 18.7 L58.1 24.9 L54.6 31.6 L58.1 31.6 L58.1 37.0 L54.4 37.0 L54.4 54.1 L46.3 54.1 L43.7 50.1 L41.6 49.1Z" fill="#111" stroke="#111" stroke-width="3"/><path d="M41.5 18.7 L58.1 18.7 L58.1 24.9 L54.6 31.6 L58.1 31.6 L58.1 37.0 L54.4 37.0 L54.4 54.1 L46.3 54.1 L43.7 50.1 L41.6 49.1Z" fill="#fff"/><path d="M81.9 7.7 L91.0 7.7 L101.1 49.1 L105.8 49.1 L102.1 54.1 L90.7 54.1Z M80.6 22.5 L84.9 22.0 L105.8 18.1 L105.8 24.9 L79.2 29.6Z M96.0 35.6 L105.8 30.2 L106.6 37.0 L80.9 52.6 L80.1 44.5Z" fill="#111" stroke="#111" stroke-width="3"/><path d="M81.9 7.7 L91.0 7.7 L101.1 49.1 L105.8 49.1 L102.1 54.1 L90.7 54.1Z M80.6 22.5 L84.9 22.0 L105.8 18.1 L105.8 24.9 L79.2 29.6Z M96.0 35.6 L105.8 30.2 L106.6 37.0 L80.9 52.6 L80.1 44.5Z" fill="#fff"/><path d="M95.0 8.7 L104.1 8.7 L105.8 17.8 L94.1 20.0Z" fill="#111" stroke="#111" stroke-width="3"/><path d="M95.0 8.7 L104.1 8.7 L105.8 17.8 L94.1 20.0Z" fill="#fff"/><path d="M58.4 10.4 L80.2 10.4 L79.9 24.2 L74.2 37.6 L80.2 54.1 L72.2 54.1 L69.8 49.4 L67.4 54.1 L59.4 54.1 L65.4 37.3 L58.4 20.2Z" fill="#111" stroke="#111" stroke-width="3"/><path d="M58.4 10.4 L80.2 10.4 L79.9 24.2 L74.2 37.6 L80.2 54.1 L72.2 54.1 L69.8 49.4 L67.4 54.1 L59.4 54.1 L65.4 37.3 L58.4 20.2Z" fill="#fff"/><path d="M109.5 29.0 L149.4 29.0 L151.3 32.4 L151.3 39.0 L149.4 39.0 L149.4 47.1 L152.8 47.6 L152.8 53.3 L105.7 53.3 L107.1 47.6 L110.5 47.1 L112.4 39.0 L105.7 39.0Z" fill="#111" stroke="#111" stroke-width="3"/><path d="M109.5 29.0 L149.4 29.0 L151.3 32.4 L151.3 39.0 L149.4 39.0 L149.4 47.1 L152.8 47.6 L152.8 53.3 L105.7 53.3 L107.1 47.6 L110.5 47.1 L112.4 39.0 L105.7 39.0Z" fill="#fff"/><path d="M110.0 7.7 L149.4 7.7 L149.4 28.1 L110.0 28.1Z" fill="#111" stroke="#111" stroke-width="3"/><path d="M110.0 7.7 L149.4 7.7 L149.4 28.1 L110.0 28.1Z" fill="#fff"/><path d="M154.7 7.7 L200.8 7.7 L200.8 31.4 L161.8 31.4 L160.8 53.3 L154.0 53.3Z" fill="#111" stroke="#111" stroke-width="3"/><path d="M154.7 7.7 L200.8 7.7 L200.8 31.4 L161.8 31.4 L160.8 53.3 L154.0 53.3Z" fill="#fff"/><path d="M163.7 32.2 L170.8 32.2 L170.8 47.6 L182.2 47.6 L184.1 50.4 L181.7 53.3 L162.7 53.3Z" fill="#111" stroke="#111" stroke-width="3"/><path d="M163.7 32.2 L170.8 32.2 L170.8 47.6 L182.2 47.6 L184.1 50.4 L181.7 53.3 L162.7 53.3Z" fill="#fff"/><path d="M176.0 32.8 L188.4 39.0 L195.1 32.8 L202.2 33.3 L195.1 42.8 L200.8 45.7 L200.8 54.7 L176.0 42.8Z" fill="#111" stroke="#111" stroke-width="3"/><path d="M176.0 32.8 L188.4 39.0 L195.1 32.8 L202.2 33.3 L195.1 42.8 L200.8 45.7 L200.8 54.7 L176.0 42.8Z" fill="#fff"/><rect x="0" y="38.5" width="210" height="3" fill="#7a7a7a" fill-opacity=".3" clip-path="url(#lgc)"/><path d="M31.9 19.1 L40.0 19.1 L40.0 20.2 L31.9 20.2Z M31.2 26.9 L33.2 26.9 L33.2 46.7 L31.2 46.7Z M42.5 25.2 L49.4 25.2 L46.3 31.3 L42.5 31.3Z M42.5 37.3 L46.3 37.3 L46.3 45.7 L42.5 45.7Z M59.4 17.3 L72.2 17.3 L69.3 26.3 L66.6 19.8 L59.4 19.8Z" fill="#fff" stroke="#111" stroke-width="1.5"/><path d="M112.8 39.5 L125.2 39.5 M134.7 39.5 L149.4 39.5 M110.5 47.3 L125.2 47.3 M134.7 47.3 L149.4 47.3 M121.4 29.5 L124.9 31.9 M125.2 31.9 L125.2 47.3 M134.7 32.4 L134.7 47.3 M120.4 32.4 L125.2 32.4 M134.7 32.4 L151.3 32.4" fill="none" stroke="#111" stroke-width="1.5"/><path d="M118.5 13.4 L141.3 13.4 L141.3 15.7 L118.5 15.7Z M118.5 20.0 L141.3 20.0 L141.3 22.4 L118.5 22.4Z M162.3 14.3 L199.8 14.3 L199.8 16.7 L162.3 16.7Z M162.3 23.3 L199.8 23.3 L199.8 25.7 L162.3 25.7Z" fill="#111" stroke="#111" stroke-width=".5"/><g font-family="Liberation Sans,sans-serif" font-weight="bold"><text x="5.5" y="77" font-size="19" textLength="47.5" lengthAdjust="spacingAndGlyphs" fill="#111" stroke="#111" stroke-width="4" stroke-linejoin="round">www.</text><text x="54.5" y="77" font-size="19" textLength="51" lengthAdjust="spacingAndGlyphs" fill="#111" stroke="#111" stroke-width="4" stroke-linejoin="round">2023</text><text x="107" y="77" font-size="19" textLength="51.5" lengthAdjust="spacingAndGlyphs" fill="#111" stroke="#111" stroke-width="4" stroke-linejoin="round">game</text><text x="160" y="77" font-size="19" textLength="41" lengthAdjust="spacingAndGlyphs" fill="#111" stroke="#111" stroke-width="4" stroke-linejoin="round">.com</text><text x="5.5" y="77" font-size="19" textLength="47.5" lengthAdjust="spacingAndGlyphs" fill="url(#lgq)" stroke="#fff" stroke-width=".4">www.</text><text x="54.5" y="77" font-size="19" textLength="51" lengthAdjust="spacingAndGlyphs" fill="url(#lgq)" stroke="#fff" stroke-width=".4">2023</text><text x="107" y="77" font-size="19" textLength="51.5" lengthAdjust="spacingAndGlyphs" fill="url(#lgq)" stroke="#fff" stroke-width=".4">game</text><text x="160" y="77" font-size="19" textLength="41" lengthAdjust="spacingAndGlyphs" fill="url(#lgq)" stroke="#fff" stroke-width=".4">.com</text></g></svg>
</body></html>
